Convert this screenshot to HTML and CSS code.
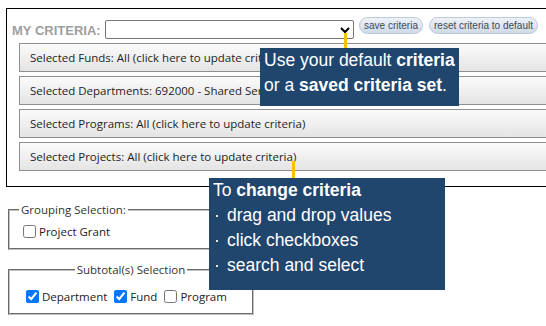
FILE: index.html
```html
<!DOCTYPE html>
<html>
<head>
<meta charset="utf-8">
<link rel="stylesheet" href="styles.css">
</head>
<body>
<div class="criteria">
  <div class="head">
    <span class="label">MY CRITERIA:</span>
    <div class="selwrap">
      <select class="sel"><option></option></select>
      <svg class="chev" width="10" height="7" viewBox="0 0 10 7"><path d="M1 1 L5 5 L9 1" fill="none" stroke="#000" stroke-width="2"/></svg>
    </div>
    <button class="pill save">save criteria</button>
    <button class="pill reset">reset criteria to default</button>
  </div>
  <div class="rows">
    <div class="row">Selected Funds: All (click here to update criteria)</div>
    <div class="row">Selected Departments: 692000 - Shared Services (click here to update criteria)</div>
    <div class="row">Selected Programs: All (click here to update criteria)</div>
    <div class="row">Selected Projects: All (click here to update criteria)</div>
  </div>
</div>

<fieldset class="fs fs-group">
  <legend>Grouping Selection:</legend>
  <div class="checks">
    <label class="chk"><input type="checkbox">Project Grant</label>
  </div>
</fieldset>

<fieldset class="fs fs-sub">
  <legend class="center">Subtotal(s) Selection</legend>
  <div class="checks">
    <label class="chk"><input type="checkbox" checked>Department</label>
    <label class="chk"><input type="checkbox" checked>Fund</label>
    <label class="chk"><input type="checkbox">Program</label>
  </div>
</fieldset>

<div class="conn conn1"></div>
<div class="tip tip1">
  <div>Use your default <b>criteria</b></div>
  <div>or a <b>saved criteria set</b>.</div>
</div>

<div class="conn conn2"></div>
<div class="tip tip2">
  <div>To <b>change criteria</b></div>
  <div class="li"><span class="dot"></span>drag and drop values</div>
  <div class="li"><span class="dot"></span>click checkboxes</div>
  <div class="li"><span class="dot"></span>search and select</div>
</div>
</body>
</html>
```

FILE: styles.css
```css
html, body {
  margin: 0;
  padding: 0;
  overflow: hidden;
  background: #fff;
}
body {
  position: relative;
  width: 546px;
  height: 326px;
  font-family: "Open Sans", "Noto Sans", sans-serif;
}

.criteria {
  margin: 8px 0 0 6px;
  width: 600px;
  border: 1px solid #000;
  padding-bottom: 15px;
}

.head {
  display: flex;
  align-items: flex-start;
  padding-left: 5px;
  height: 30px;
}
.label {
  width: 93px;
  margin-top: 14px;
  font: bold 13px/15px "Liberation Sans", Arial, sans-serif;
  color: #9e9e9e;
  white-space: nowrap;
}
.selwrap {
  position: relative;
  margin-top: 11px;
}
.sel {
  display: block;
  -webkit-appearance: none;
  appearance: none;
  width: 249px;
  height: 19px;
  box-sizing: border-box;
  border: 1px solid #767676;
  border-radius: 2px;
  background: #fff;
  margin: 0;
}
.chev {
  position: absolute;
  left: 235px;
  top: 7px;
}
.pill {
  margin-top: 8px;
  height: 17px;
  box-sizing: border-box;
  padding: 0;
  border: 1px solid #bccadb;
  border-radius: 9px;
  background: linear-gradient(#eef2f7, #cfdae6);
  font: 10px/15px "Liberation Sans", Arial, sans-serif;
  color: #3e4a59;
  white-space: nowrap;
}
.save { margin-left: 5px; width: 64px; }
.reset { margin-left: 6px; width: 109px; }

.rows {
  margin: 4px 0 0 12px;
  display: flex;
  flex-direction: column;
  gap: 4px;
}
.row {
  height: 29px;
  box-sizing: border-box;
  border: 1px solid #8f8f8f;
  border-right: none;
  background: linear-gradient(#fbfbfb, #e4e4e4);
  padding-left: 10px;
  display: flex;
  align-items: center;
  font-size: 11.5px;
  color: #1e1e1e;
  white-space: nowrap;
}

.fs {
  margin: 0 0 0 8px;
  width: 246px;
  box-sizing: border-box;
  border: 2px groove #c0c0c0;
  font-size: 11.5px;
  color: #222;
}
.fs legend {
  padding: 0 2px;
  line-height: 16px;
  color: #333;
}
.fs legend.center {
  margin: 0 auto;
}
.fs-group {
  margin-top: 15px;
  padding: 4px 9px 7px 9px;
}
.fs-sub {
  margin-top: 12px;
  padding: 9px 12px 7px 12px;
}
.checks {
  display: flex;
  align-items: center;
}
.chk {
  display: flex;
  align-items: center;
  margin-right: 3px;
  line-height: 19px;
}
.chk input {
  width: 13px;
  height: 13px;
  margin: 3px 3px 3px 4px;
}

.tip {
  position: absolute;
  background: #21466e;
  color: #fff;
  font: 17.5px/25px "Liberation Sans", Arial, sans-serif;
  padding-left: 4px;
  box-sizing: border-box;
  white-space: nowrap;
}
.tip1 { left: 260px; top: 48px; width: 199px; height: 58px; }
.tip2 { left: 209px; top: 178px; width: 236px; height: 112px; }
.li {
  display: flex;
  align-items: center;
}
.dot {
  width: 2px;
  height: 2px;
  background: #e6e6e6;
  margin: 1px 9px 0 3px;
}
.conn {
  position: absolute;
  width: 3px;
  background: #f6c200;
}
.conn1 { left: 344px; top: 33px; height: 15px; }
.conn2 { left: 292px; top: 161px; height: 17px; }
```
